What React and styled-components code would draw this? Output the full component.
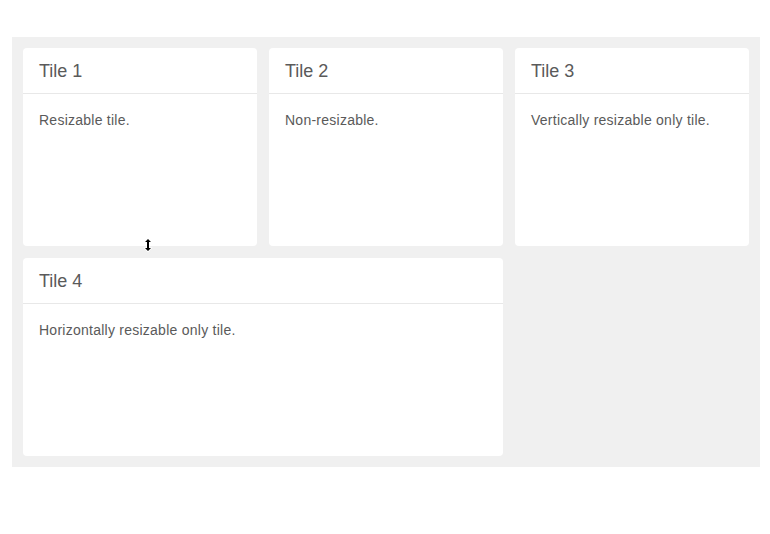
import React from 'react';
import styled, { createGlobalStyle } from 'styled-components';

const GlobalStyle = createGlobalStyle`
    html, body {
        margin: 0;
        padding: 0;
        background: #ffffff;
    }
    body {
        font-family: "Liberation Sans", Arial, sans-serif;
    }
`;

const Page = styled.div`
    padding: 37px 10px 68px 12px;
`;

const Board = styled.div`
    position: relative;
    display: grid;
    grid-template-columns: repeat(3, 234px);
    grid-auto-rows: 198px;
    gap: 12px;
    padding: 11px;
    width: 748px;
    box-sizing: border-box;
    background-color: #f0f0f0;
`;

const Tile = styled.div`
    grid-column: span ${props => props.span || 1};
    background-color: #fff;
    border-radius: 4px;
    display: flex;
    flex-direction: column;
    overflow: hidden;
`;

const TileHeader = styled.div`
    height: 46px;
    box-sizing: border-box;
    padding: 1px 16px 0;
    display: flex;
    align-items: center;
    border-bottom: 1px solid #e8e8e8;
    font-size: 18px;
    color: #5a5a5a;
`;

const TileBody = styled.div`
    padding: 18px 16px;
    font-size: 14px;
    letter-spacing: 0.25px;
    color: #5a5a5a;
`;

const Cursor = styled.svg`
    position: absolute;
    left: 131px;
    top: 200px;
`;

const tiles = [
    { title: 'Tile 1', text: 'Resizable tile.' },
    { title: 'Tile 2', text: 'Non-resizable.' },
    { title: 'Tile 3', text: 'Vertically resizable only tile.' },
    { title: 'Tile 4', text: 'Horizontally resizable only tile.', span: 2 },
];

const App = () => (
    <Page>
        <GlobalStyle />
        <Board>
            {tiles.map(tile => (
                <Tile key={tile.title} span={tile.span}>
                    <TileHeader>{tile.title}</TileHeader>
                    <TileBody>{tile.text}</TileBody>
                </Tile>
            ))}
            <Cursor width="10" height="16" viewBox="0 0 10 16">
                <path d="M5 0.5 L9.5 5.5 L6.5 5.5 L6.5 10.5 L9.5 10.5 L5 15.5 L0.5 10.5 L3.5 10.5 L3.5 5.5 L0.5 5.5 Z" fill="#fff" />
                <path d="M5 2 L8 5 L6 5 L6 11 L8 11 L5 14 L2 11 L4 11 L4 5 L2 5 Z" fill="#000" />
            </Cursor>
        </Board>
    </Page>
);

export default App;
